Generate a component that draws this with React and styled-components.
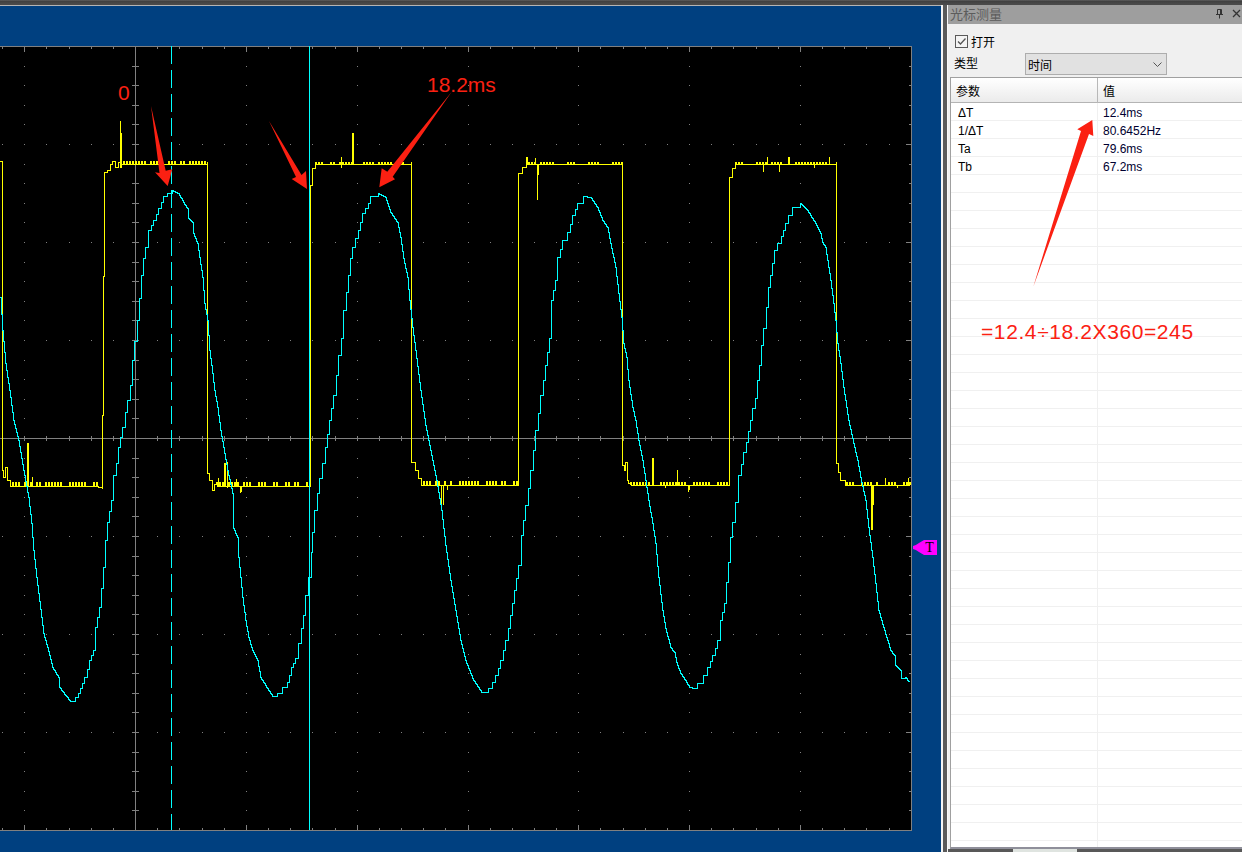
import React from "react";
import styled, { createGlobalStyle } from "styled-components";

const GRAY = "#808080";
const PITCH_X = 110.8 / 5;
const PITCH_Y = 19.6;
const TOP = 46;
const BOTTOM = 830;
const CENTER_Y = 438;
const RIGHT = 911;

// cyan channel, corners read off the trace
const cyanPoints = [
  [0, 297], [2, 330], [5, 363], [10, 397], [13, 420], [18, 440], [23, 470], [28, 497], [31, 523], [33, 550],
  [36, 577], [38, 593], [41, 617], [43, 633], [47, 647], [52, 667], [58, 677], [59, 687], [65, 695], [70, 701],
  [75, 697], [80, 688], [84, 677], [89, 660], [93, 650], [95, 627], [99, 607], [101, 588], [103, 567], [105, 540],
  [107, 522], [111, 500], [113, 475], [116, 463], [118, 447], [122, 427], [125, 412], [127, 400], [130, 385],
  [132, 360], [134, 341], [137, 320], [139, 298], [141, 275], [143, 258], [145, 247], [148, 230], [153, 220],
  [158, 208], [163, 196], [167, 193], [172, 190], [178, 193], [183, 202], [187, 208], [188, 218], [192, 222],
  [193, 233], [197, 243], [199, 257], [202, 277], [204, 303], [207, 320], [209, 350], [212, 373], [214, 390],
  [217, 407], [220, 430], [223, 447], [227, 470], [232, 493], [233, 528], [237, 537], [238, 557], [240, 577],
  [242, 597], [245, 620], [248, 637], [252, 650], [257, 660], [260, 677], [265, 685], [272, 696], [277, 693],
  [282, 687], [287, 682], [291, 667], [295, 658], [298, 643], [301, 628], [303, 615], [305, 595], [308, 577],
  [311, 552], [312, 532], [314, 510], [317, 493], [319, 478], [322, 463], [325, 447], [329, 420], [333, 395],
  [338, 355], [341, 338], [343, 310], [346, 292], [348, 275], [350, 258], [352, 247], [355, 238], [358, 230],
  [362, 213], [368, 203], [370, 196], [378, 193], [385, 197], [390, 212], [397, 222], [400, 237], [403, 258],
  [407, 277], [409, 300], [412, 327], [415, 350], [420, 390], [425, 425], [430, 450], [436, 480], [441, 510],
  [445, 545], [450, 580], [455, 610], [460, 640], [465, 660], [472, 678], [481, 692], [488, 688], [495, 675],
  [500, 660], [505, 640], [510, 615], [514, 590], [518, 565], [521, 535], [525, 505], [530, 470], [535, 430],
  [540, 395], [545, 365], [549, 338], [551, 300], [555, 280], [557, 257], [562, 240], [567, 232], [572, 215],
  [577, 203], [583, 196], [590, 197], [597, 207], [602, 220], [607, 227], [610, 243], [615, 267], [618, 293],
  [621, 317], [623, 343], [626, 357], [628, 380], [632, 407], [635, 420], [638, 440], [642, 460], [645, 480],
  [648, 500], [652, 523], [655, 543], [658, 577], [662, 610], [665, 628], [670, 647], [674, 652], [676, 662],
  [680, 673], [685, 680], [689, 687], [694, 688], [697, 683], [703, 675], [707, 667], [712, 655], [717, 640],
  [720, 620], [724, 603], [726, 582], [728, 562], [730, 537], [732, 522], [735, 502], [738, 475], [743, 452],
  [746, 442], [750, 420], [752, 408], [755, 398], [757, 380], [759, 365], [761, 345], [763, 328], [766, 307],
  [768, 287], [770, 275], [772, 263], [774, 250], [777, 243], [781, 236], [785, 223], [788, 215], [792, 207],
  [800, 203], [807, 210], [815, 223], [820, 233], [822, 242], [825, 247], [827, 260], [830, 280], [833, 303],
  [835, 320], [837, 343], [840, 363], [843, 387], [846, 407], [848, 420], [853, 443], [857, 460], [860, 477],
  [865, 500], [868, 527], [872, 557], [875, 583], [878, 610], [883, 627], [890, 650], [894, 655], [895, 665],
  [900, 670], [901, 678], [905, 677], [909, 682],
];

function buildCyan() {
  let thin = "";
  let thick = "";
  for (let i = 1; i < cyanPoints.length; i++) {
    const [x0, y0] = cyanPoints[i - 1];
    const [x1, y1] = cyanPoints[i];
    if (y1 > y0) {
      thick += `M${x0} ${y0}`;
      for (let x = x0 + 1; x <= x1; x++) {
        const y = Math.round(y0 + ((y1 - y0) * (x - x0)) / (x1 - x0));
        thick += `H${x}V${y}`;
      }
    } else if (x1 - x0 >= 4 && y0 - y1 > 8) {
      const midX = Math.round((x0 + x1) / 2);
      const midY = Math.round((y0 + y1) / 2);
      thin += `M${x0} ${y0}H${midX}V${midY}H${x1}V${y1}`;
    } else {
      thin += `M${x0} ${y0}H${x1}V${y1}`;
    }
  }
  return { thin, thick };
}

const stair = (pts) => pts.map(([x, y]) => `H${x}V${y}`).join("");

// flat top or bottom of the square wave with its comb of noise
function comb(x0, x1, base, height, seed, density, events = {}) {
  let s = seed;
  let gap = 0;
  let teeth = 3;
  let d = "";
  for (let x = x0; x < x1; x++) {
    s = (s * 9301 + 49297) % 233280;
    d += `H${x}`;
    if (events[x]) {
      d += events[x].map((y) => `V${y}`).join("") + `V${base}`;
    } else if (gap > 0) {
      gap--;
    } else if (x % 3 === 0) {
      d += `V${base - height + (s % 3 === 0 ? 1 : 0)}H${x + 1}V${base}`;
      teeth--;
      if (teeth === 0) {
        teeth = 2 + (s % 4);
        gap = Math.round((s % 7) * (1 - density) * 4);
      }
    }
  }
  return d + `H${x1}`;
}

const yellowPath =
  "M0 161" +
  stair([[2.5, 470], [3.5, 477], [5, 467], [7, 480], [10, 486]]) +
  comb(10, 98, 486, 4, 11, 0.7, { 27: [443, 486], 28: [443, 486], 32: [477] }) +
  stair([[98, 487], [102.5, 489], [102.5, 415], [103.5, 276], [104.5, 172], [107, 170], [110, 164], [112, 161], [115, 167], [118, 162]]) +
  comb(118, 207, 164, 3, 23, 0.55, { 120: [121, 168], 121: [133, 168] }) +
  stair([[207.5, 162], [207.5, 473], [209, 480], [212, 490], [214, 484]]) +
  comb(214, 310, 486, 4, 37, 0.65, { 218: [478], 224: [463, 486], 225: [463, 486], 227: [462, 488], 236: [479], 240: [493], 241: [492] }) +
  stair([[309.5, 486], [310, 185], [312, 168], [315, 164]]) +
  comb(315, 411, 164, 3, 41, 0.55, { 341: [157, 168], 352: [133, 164], 353: [133, 164] }) +
  stair([[411.5, 162], [411.5, 462], [415, 470], [418, 478], [421, 485]]) +
  comb(421, 519, 485, 4, 53, 0.65, { 441: [507, 485], 443: [505, 485], 447: [490] }) +
  stair([[518.5, 483], [518.5, 173], [522, 167], [526, 157], [527, 164]]) +
  comb(527, 622, 164, 3, 67, 0.5, { 535: [158, 164], 537: [200, 164], 538: [175, 164] }) +
  stair([[622.5, 162], [622.5, 465], [624, 470], [625.7, 462], [627, 480], [628, 483], [630, 485]]) +
  comb(630, 729, 485, 4, 71, 0.65, { 652: [458, 485], 653: [458, 485], 665: [488], 677: [470, 485], 688: [492], 689: [490] }) +
  stair([[729.5, 484], [729.5, 177], [732, 168], [735, 164]]) +
  comb(735, 836, 164, 3, 83, 0.5, { 763: [172], 767: [157], 779: [172], 788: [157], 789: [157], 814: [168], 829: [157] }) +
  stair([[836.5, 162], [836.5, 463], [838, 472], [840, 480], [845, 485]]) +
  comb(845, 910, 485, 4, 97, 0.6, { 871: [530, 485], 872: [530, 485], 873: [505, 485], 885: [478], 897: [488], 908: [478] });

const cyan = buildCyan();

function Graticule() {
  const items = [];
  const rect = (x, y, w, h) => items.push(<rect key={items.length} x={x} y={y} width={w} height={h} />);

  for (let i = -1; i <= 41; i++) {
    const x = Math.round(24.3 + PITCH_X * i);
    if (x < 0 || x > RIGHT) continue;
    const major = (i + 100) % 5 === 0;
    const h = major ? 5 : 2;
    rect(x, TOP, 1, h + 1);
    rect(x, BOTTOM - h, 1, h);
    rect(x, CENTER_Y - 2, 1, 5);
    for (let r = 1; r < 8; r++) {
      if (r !== 4) rect(x, TOP + 98 * r, 1, 1);
    }
  }
  for (let j = 1; j < 40; j++) {
    const y = Math.round(TOP + PITCH_Y * j);
    const major = j % 5 === 0;
    rect(132, y, 7, 1);
    rect(RIGHT - (major ? 5 : 2), y, major ? 5 : 2, 1);
    for (let c = 0; c < 8; c++) {
      if (c !== 1) rect(Math.round(24.3 + 110.8 * c), y, 1, 1);
    }
  }
  return (
    <g fill={GRAY}>
      {items}
      <rect x="135" y={TOP} width="1" height={BOTTOM - TOP} />
      <rect x="0" y={CENTER_Y} width={RIGHT} height="1" />
      <rect x="0" y={TOP} width={RIGHT} height="1" />
      <rect x="0" y={BOTTOM} width={RIGHT + 1} height="1" />
      <rect x={RIGHT} y={TOP} width="1" height={BOTTOM - TOP} />
    </g>
  );
}

const measurements = [
  ["ΔT", "12.4ms"],
  ["1/ΔT", "80.6452Hz"],
  ["Ta", "79.6ms"],
  ["Tb", "67.2ms"],
];
const rows = [...measurements, ...Array.from({ length: 38 }, () => ["", ""])];

const arrows = [
  "151,106 165.7,170.7 172.3,169.3 167.7,186 155,172.3 159.5,173",
  "269,121 301.5,175 306,171 307,189 291.7,179 296,177",
  "451.7,91.7 392.7,176.7 395,179.3 379.3,187.3 381.7,168.3 387.3,171.7",
  "1033.3,286.7 1089,134 1093.3,136 1092.3,120 1077.3,129.3 1081,131",
];

export default function App() {
  return (
    <>
      <GlobalStyle />
      <Window>
        <TopBar />
        <Main>
          <ScopePane>
            <Scope viewBox={`0 ${TOP} 912 785`}>
              <rect x="0" y={TOP} width="912" height="785" fill="#000" />
              <Graticule />
              <path d={yellowPath} fill="none" stroke="#ffff00" strokeWidth="1" />
              <path d={cyan.thin} fill="none" stroke="#00ffff" strokeWidth="1" />
              <path d={cyan.thick} fill="none" stroke="#00ffff" strokeWidth="1" />
              <line x1="171.5" y1={TOP} x2="171.5" y2={BOTTOM} stroke="#00ffff" strokeDasharray="18 6" />
              <line x1="309.5" y1={TOP} x2="309.5" y2={BOTTOM} stroke="#00ffff" />
            </Scope>
            <TriggerFlag>T</TriggerFlag>
          </ScopePane>
          <Splitter />
          <Panel>
            <TitleBar>
              <TitleText>光标测量</TitleText>
              <TitleIcons>
                <svg width="9" height="11" viewBox="0 0 9 11" fill="none" stroke="#333" strokeWidth="1">
                  <path d="M2.5 1.5H6.5V6.5H2.5ZM5.5 1.5V6.5M1 6.5H8M4.5 6.5V10.5" />
                </svg>
                <svg width="9" height="9" viewBox="0 0 9 9" fill="none" stroke="#333" strokeWidth="1.3">
                  <path d="M1 1L8 8M8 1L1 8" />
                </svg>
              </TitleIcons>
            </TitleBar>
            <CheckRow>
              <CheckBox>
                <svg width="11" height="11" viewBox="0 0 11 11" fill="none" stroke="#555" strokeWidth="1.3">
                  <path d="M2 5.5L4.5 8L9.5 2.5" />
                </svg>
              </CheckBox>
              <Label>打开</Label>
            </CheckRow>
            <TypeRow>
              <TypeLabel>类型</TypeLabel>
              <Combo>
                <ComboText>时间</ComboText>
                <svg width="9" height="5" viewBox="0 0 9 5" fill="none" stroke="#555" strokeWidth="1">
                  <path d="M0.5 0.5L4.5 4.5L8.5 0.5" />
                </svg>
              </Combo>
            </TypeRow>
            <Table>
              <HeaderRow>
                <HeaderCell>参数</HeaderCell>
                <HeaderCell>值</HeaderCell>
              </HeaderRow>
              {rows.map(([name, value], i) => (
                <Row key={i}>
                  <NameCell>{name}</NameCell>
                  <ValueCell>{value}</ValueCell>
                </Row>
              ))}
            </Table>
            <Footer>
              <FooterTab />
            </Footer>
          </Panel>
        </Main>
        <ArrowLayer viewBox="0 0 1242 852">
          {arrows.map((points) => (
            <polygon key={points} points={points} fill="#fb2012" />
          ))}
        </ArrowLayer>
        <Note $left={118} $top={81}>0</Note>
        <Note $left={427} $top={73}>18.2ms</Note>
        <Note $left={981} $top={320} $spacing={0.6}>=12.4÷18.2X360=245</Note>
      </Window>
    </>
  );
}

const GlobalStyle = createGlobalStyle`
  html, body {
    margin: 0;
    padding: 0;
    background: #555;
  }
`;
const Window = styled.div`
  position: relative;
  display: flex;
  flex-direction: column;
  width: 1242px;
  height: 852px;
  overflow: hidden;
  font-family: "Liberation Sans", "Noto Sans CJK SC", sans-serif;
  font-size: 12px;
  color: #000;
`;
const TopBar = styled.div`
  flex: none;
  height: 5px;
  background: linear-gradient(#6a6a6a 0, #3f3f3f 1px, #4a4a4a 4px);
`;
const Main = styled.div`
  flex: 1;
  display: flex;
  min-height: 0;
`;
const ScopePane = styled.div`
  position: relative;
  flex: none;
  box-sizing: border-box;
  width: 941px;
  padding: 40px 29px 21px 0;
  background: #004080;
  border-top: 1px solid #b4b4b4;
`;
const Scope = styled.svg`
  display: block;
  width: 912px;
  height: 785px;
  shape-rendering: crispEdges;
`;
const TriggerFlag = styled.div`
  position: absolute;
  left: 913px;
  top: 534px;
  width: 24px;
  height: 15px;
  padding-left: 9px;
  box-sizing: border-box;
  background: #ff00ff;
  clip-path: polygon(0 40%, 12% 33%, 25% 20%, 46% 0, 100% 0, 100% 100%, 46% 100%, 25% 80%, 12% 67%, 0 60%);
  font-family: "Liberation Serif", serif;
  font-size: 14px;
  line-height: 15px;
  text-align: center;
`;
const Splitter = styled.div`
  flex: none;
  width: 6px;
  box-sizing: border-box;
  background: #5a5a5a;
  border-left: 2px solid #f4f4f4;
`;
const Panel = styled.div`
  flex: 1;
  display: flex;
  flex-direction: column;
  min-width: 0;
  background: #f0f0f0;
  border-left: 1px solid #f8f8f8;
`;
const TitleBar = styled.div`
  flex: none;
  display: flex;
  align-items: center;
  justify-content: space-between;
  box-sizing: border-box;
  height: 19px;
  padding: 0 1px 3px 2px;
  background: #9e9e9e;
`;
const TitleText = styled.span`
  font-family: "Noto Sans CJK SC", sans-serif;
  font-size: 13px;
  color: #5c5c5c;
`;
const TitleIcons = styled.div`
  display: flex;
  align-items: center;
  gap: 8px;
`;
const CheckRow = styled.div`
  flex: none;
  display: flex;
  align-items: center;
  gap: 3px;
  height: 13px;
  margin: 11px 0 0 7px;
`;
const CheckBox = styled.div`
  display: flex;
  width: 11px;
  height: 11px;
  border: 1px solid #5a5a5a;
  background: #f4f4f4;
`;
const Label = styled.span`
  font-family: "Noto Sans CJK SC", sans-serif;
  font-size: 12px;
  line-height: 16px;
`;
const TypeRow = styled.div`
  flex: none;
  display: flex;
  align-items: center;
  height: 22px;
  margin: 5px 0 0 6px;
`;
const TypeLabel = styled(Label)`
  width: 71px;
  margin-top: -3px;
`;
const Combo = styled.div`
  display: flex;
  align-items: center;
  justify-content: space-between;
  box-sizing: border-box;
  width: 142px;
  height: 22px;
  padding: 0 4px 0 2px;
  background: #e1e1e1;
  border: 1px solid #adadad;
`;
const ComboText = styled(Label)`
  margin-top: 2px;
`;
const Table = styled.div`
  flex: 1;
  min-height: 0;
  margin: 2px 0 0 2px;
  overflow: hidden;
  background: #fff;
  border: 1px solid #a0a0a0;
  border-right: 0;
  border-bottom: 2px solid #8f8f9a;
`;
const HeaderRow = styled.div`
  display: grid;
  grid-template-columns: 146px 1fr;
  height: 24px;
  background: linear-gradient(#ffffff, #ebebeb);
  border-bottom: 1px solid #b4b4b4;
`;
const HeaderCell = styled.div`
  padding: 1px 0 0 5px;
  font-family: "Noto Sans CJK SC", sans-serif;
  font-size: 12px;
  line-height: 24px;
  & + & {
    border-left: 1px solid #b8b8b8;
  }
`;
const Row = styled.div`
  display: grid;
  grid-template-columns: 146px 1fr;
  box-sizing: border-box;
  height: 18px;
  border-bottom: 1px solid #f0f0f0;
  line-height: 20px;
`;
const NameCell = styled.div`
  padding-left: 7px;
`;
const ValueCell = styled.div`
  padding-left: 5px;
  border-left: 1px solid #f0f0f0;
  color: #000030;
`;
const Footer = styled.div`
  flex: none;
  height: 3px;
  background: #585858;
`;
const FooterTab = styled.div`
  width: 64px;
  height: 3px;
  margin-left: 65px;
  background: #dfe4e0;
`;
const ArrowLayer = styled.svg`
  position: absolute;
  inset: 0;
  width: 1242px;
  height: 852px;
  pointer-events: none;
`;
const Note = styled.span`
  position: absolute;
  left: ${(p) => p.$left}px;
  top: ${(p) => p.$top}px;
  font-size: 21px;
  letter-spacing: ${(p) => p.$spacing || 0}px;
  line-height: 24px;
  white-space: nowrap;
  color: #fb2012;
`;
